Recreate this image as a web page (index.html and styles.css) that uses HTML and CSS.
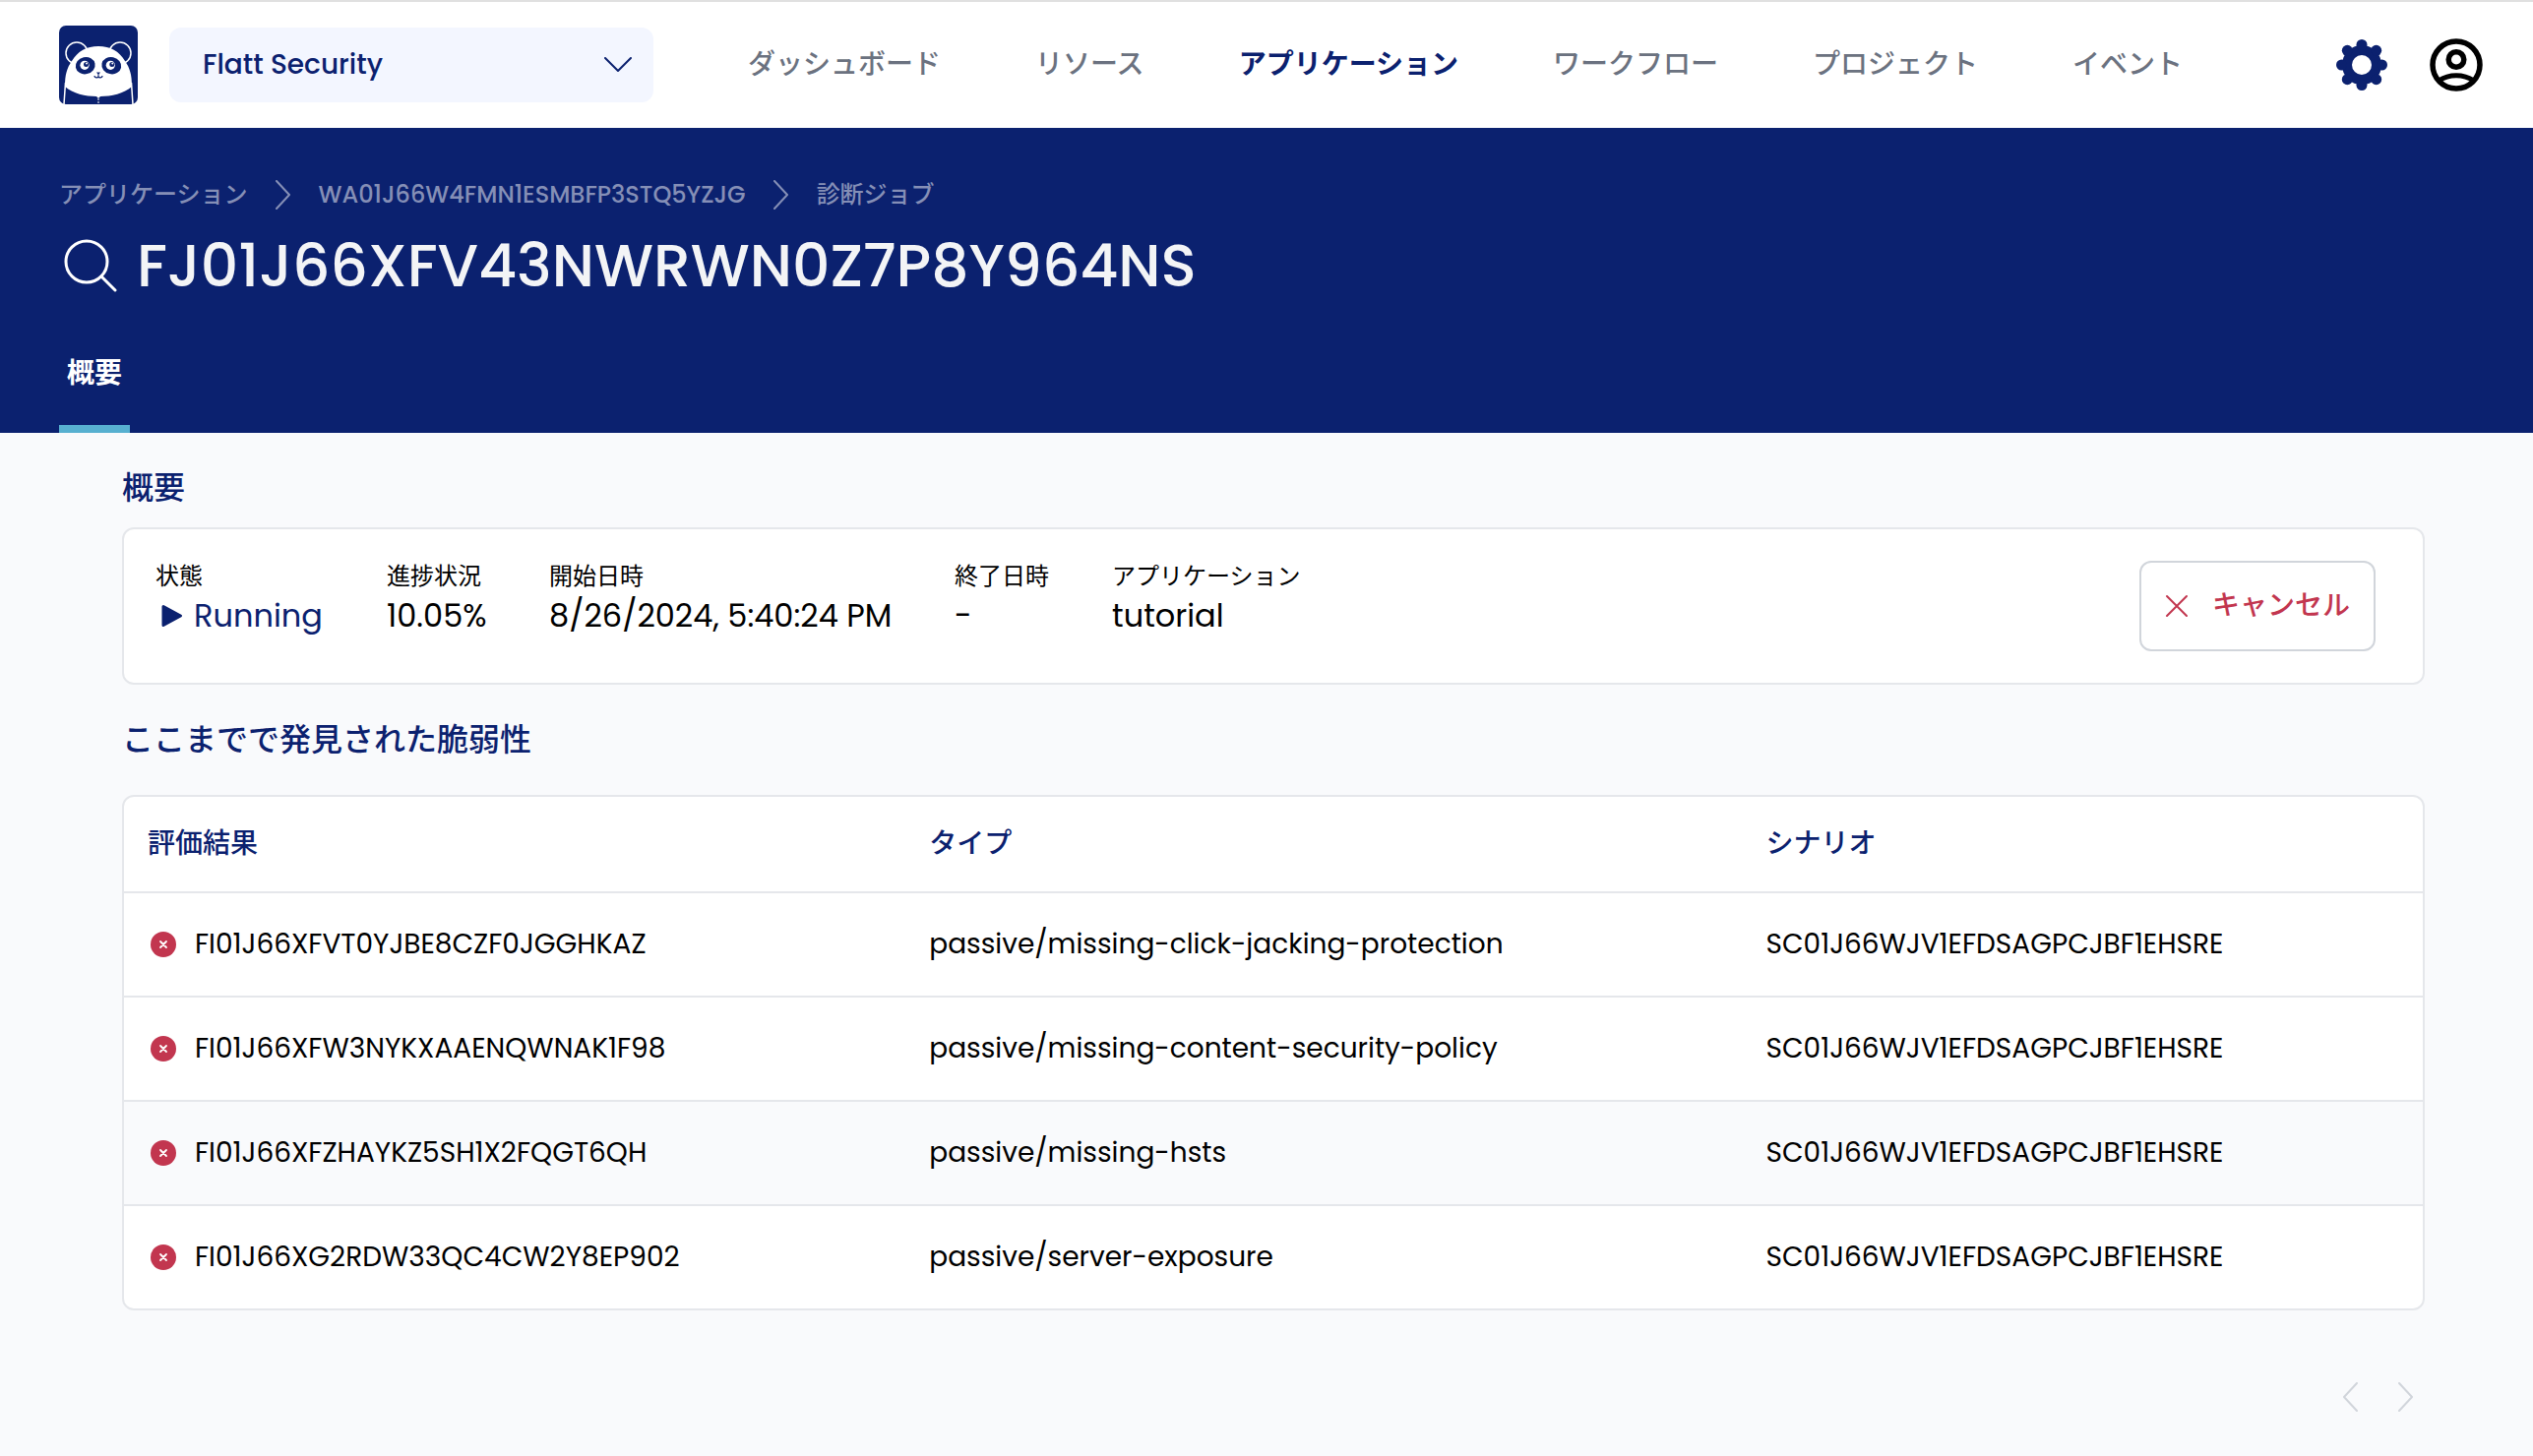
FILE: index.html
```html
<!DOCTYPE html>
<html lang="ja">
<head>
<meta charset="utf-8">
<meta name="viewport" content="width=device-width, initial-scale=1">
<title>FJ01J66XFV43NWRWN0Z7P8Y964NS</title>
<link rel="stylesheet" href="styles.css">
</head>
<body>
<svg class="sprite" aria-hidden="true">
  <symbol id="failed" viewBox="0 0 26 26">
    <circle cx="13" cy="13" r="13" fill="#c2364f"/>
    <path d="M10 10l6 6M16 10l-6 6" stroke="#fff" stroke-width="1.800" stroke-linecap="round"/>
  </symbol>
  <symbol id="chevron" viewBox="0 0 16 30">
    <path d="M1 1l13 14L1 29" fill="none" stroke="currentColor" stroke-width="2" stroke-linecap="round" stroke-linejoin="round"/>
  </symbol>
</svg>

<header class="topbar">
  <a class="logo" href="#" aria-label="ホーム">
    <svg viewBox="0 0 80 80" width="80" height="80">
      <rect width="80" height="80" rx="7" fill="#0b216f"/>
      <g fill="#0b216f" stroke="#fff" stroke-width="1.5">
        <circle cx="18" cy="28" r="11"/>
        <circle cx="62" cy="28" r="11"/>
      </g>
      <path d="M6 62C6 50 8 43 13 36C19 26 28 21 40 21C52 21 61 26 67 36C72 43 74 50 74 62C66 69 53 72 42 72L40 74L38 72C27 72 14 69 6 62Z" fill="#fff"/>
      <path d="M6.500 58L5 80M73.500 58L75 80" stroke="#fff" stroke-width="1.500"/>
      <path d="M40 74v6" stroke="#fff" stroke-width="1" stroke-dasharray="2 1"/>
      <ellipse cx="26.700" cy="40.700" rx="10" ry="8.600" transform="rotate(-12 26.700 40.700)" fill="#0b216f"/>
      <ellipse cx="53.300" cy="40.700" rx="10" ry="8.600" transform="rotate(12 53.300 40.700)" fill="#0b216f"/>
      <circle cx="26" cy="40.300" r="4.600" fill="#fff"/>
      <circle cx="52.300" cy="40.300" r="4.600" fill="#fff"/>
      <circle cx="27.500" cy="39.500" r="2.500" fill="#0b216f"/>
      <circle cx="53.800" cy="39.500" r="2.500" fill="#0b216f"/>
      <circle cx="28" cy="38.500" r="1" fill="#fff"/>
      <circle cx="54.300" cy="38.500" r="1" fill="#fff"/>
      <path d="M38 47.500h4L40.500 49.500v1.500h-1v-1.500z" fill="#0b216f"/>
      <path d="M36 51c0 2.500 3.500 2.500 4 .5c.5 2 4 2 4-.5" fill="none" stroke="#0b216f" stroke-width="1.300"/>
    </svg>
  </a>
  <div class="team">
    <select class="team-select" aria-label="チーム">
      <option>Flatt Security</option>
    </select>
    <svg class="team-arrow" viewBox="0 0 28 16" width="28" height="16" aria-hidden="true">
      <path d="M1 1l13 13L27 1" fill="none" stroke="#0b216f" stroke-width="2" stroke-linecap="round" stroke-linejoin="round"/>
    </svg>
  </div>
  <nav class="nav" aria-label="メイン">
    <a href="#">ダッシュボード</a>
    <a href="#">リソース</a>
    <a href="#" class="current" aria-current="page">アプリケーション</a>
    <a href="#">ワークフロー</a>
    <a href="#">プロジェクト</a>
    <a href="#">イベント</a>
  </nav>
  <div class="tools">
    <button class="icon-button" type="button" aria-label="設定">
      <svg viewBox="0 0 54 54" width="54" height="54">
        <g fill="#0b216f">
          <circle cx="27" cy="27" r="15" fill="none" stroke="#0b216f" stroke-width="10"/>
          <circle cx="27" cy="6.500" r="5.500"/><circle cx="27" cy="47.500" r="5.500"/>
          <circle cx="6.500" cy="27" r="5.500"/><circle cx="47.500" cy="27" r="5.500"/>
          <circle cx="12.300" cy="12.300" r="5.500"/><circle cx="41.700" cy="12.300" r="5.500"/>
          <circle cx="12.300" cy="41.700" r="5.500"/><circle cx="41.700" cy="41.700" r="5.500"/>
        </g>
      </svg>
    </button>
    <button class="icon-button" type="button" aria-label="アカウント">
      <svg viewBox="0 0 54 54" width="54" height="54" fill="none" stroke="#000">
        <circle cx="27" cy="27" r="24" stroke-width="5.500"/>
        <circle cx="27" cy="21.500" r="7.800" stroke-width="5.500"/>
        <path d="M9 43C20 36 34 36 45 43" stroke-width="5"/>
      </svg>
    </button>
  </div>
</header>

<section class="hero">
  <nav class="crumbs" aria-label="パンくず">
    <a href="#">アプリケーション</a>
    <svg width="16" height="30" aria-hidden="true"><use href="#chevron"/></svg>
    <a href="#">WA01J66W4FMN1ESMBFP3STQ5YZJG</a>
    <svg width="16" height="30" aria-hidden="true"><use href="#chevron"/></svg>
    <a href="#">診断ジョブ</a>
  </nav>
  <div class="title-row">
    <svg viewBox="0 0 54 54" width="54" height="54" aria-hidden="true">
      <circle cx="23" cy="23" r="21" fill="none" stroke="#fff" stroke-width="3"/>
      <path d="M38 38l14 14" stroke="#fff" stroke-width="3" stroke-linecap="round"/>
    </svg>
    <h1>FJ01J66XFV43NWRWN0Z7P8Y964NS</h1>
  </div>
  <div class="tabs">
    <a class="tab" href="#" aria-current="page">概要</a>
  </div>
</section>

<main class="content">
  <h2 class="heading">概要</h2>
  <section class="summary">
    <dl class="facts">
      <div>
        <dt>状態</dt>
        <dd class="status">
          <svg viewBox="0 0 22 24" width="22" height="24" aria-hidden="true"><path d="M2 2.500L19.500 12L2 21.500Z" fill="#0b216f" stroke="#0b216f" stroke-width="3" stroke-linejoin="round"/></svg>Running</dd>
      </div>
      <div><dt>進捗状況</dt><dd>10.05%</dd></div>
      <div><dt>開始日時</dt><dd>8/26/2024, 5:40:24 PM</dd></div>
      <div><dt>終了日時</dt><dd>-</dd></div>
      <div><dt>アプリケーション</dt><dd>tutorial</dd></div>
    </dl>
    <button class="cancel" type="button">
      <svg viewBox="0 0 24 24" width="24" height="24" aria-hidden="true"><path d="M2 2l20 20M22 2L2 22" stroke="#c2364f" stroke-width="2" stroke-linecap="round"/></svg>
      キャンセル
    </button>
  </section>

  <h2 class="heading">ここまでで発見された脆弱性</h2>
  <div class="table-card">
    <table class="findings">
      <thead>
        <tr><th class="col-result" scope="col">評価結果</th><th class="col-type" scope="col">タイプ</th><th scope="col">シナリオ</th></tr>
      </thead>
      <tbody>
        <tr>
          <td><span class="result"><svg width="26" height="26" aria-hidden="true"><use href="#failed"/></svg>FI01J66XFVT0YJBE8CZF0JGGHKAZ</span></td>
          <td>passive/missing-click-jacking-protection</td>
          <td>SC01J66WJV1EFDSAGPCJBF1EHSRE</td>
        </tr>
        <tr>
          <td><span class="result"><svg width="26" height="26" aria-hidden="true"><use href="#failed"/></svg>FI01J66XFW3NYKXAAENQWNAK1F98</span></td>
          <td>passive/missing-content-security-policy</td>
          <td>SC01J66WJV1EFDSAGPCJBF1EHSRE</td>
        </tr>
        <tr class="hovered">
          <td><span class="result"><svg width="26" height="26" aria-hidden="true"><use href="#failed"/></svg>FI01J66XFZHAYKZ5SH1X2FQGT6QH</span></td>
          <td>passive/missing-hsts</td>
          <td>SC01J66WJV1EFDSAGPCJBF1EHSRE</td>
        </tr>
        <tr>
          <td><span class="result"><svg width="26" height="26" aria-hidden="true"><use href="#failed"/></svg>FI01J66XG2RDW33QC4CW2Y8EP902</span></td>
          <td>passive/server-exposure</td>
          <td>SC01J66WJV1EFDSAGPCJBF1EHSRE</td>
        </tr>
      </tbody>
    </table>
  </div>

  <div class="pager">
    <button class="pager-button" type="button" aria-label="前へ" disabled><svg class="prev" width="16" height="30"><use href="#chevron"/></svg></button>
    <button class="pager-button" type="button" aria-label="次へ" disabled><svg width="16" height="30"><use href="#chevron"/></svg></button>
  </div>
</main>
</body>
</html>
```
FILE: styles.css
```css
* {
  box-sizing: border-box;
}

body {
  margin: 0;
  background: #f9fafc;
  color: #000;
  font-family: Poppins, Inter, "Noto Sans CJK JP", sans-serif;
  font-size: 28px;
  line-height: 48px;
}

a {
  color: inherit;
  text-decoration: none;
}

button,
select {
  font: inherit;
  color: inherit;
}

svg {
  display: block;
  flex: none;
}

h1,
h2,
dl,
dd {
  margin: 0;
}

.sprite {
  display: none;
}

/* Top bar */
.topbar {
  display: flex;
  align-items: center;
  height: 130px;
  padding: 0 51px 0 60px;
  border-top: 2px solid #e0e0e0;
  background: #fff;
}

.team {
  display: grid;
  align-items: center;
  width: 492px;
  margin-left: 32px;
}

.team-select {
  grid-area: 1 / 1;
  height: 76px;
  padding: 0 34px;
  border: 0;
  border-radius: 12px;
  appearance: none;
  background: #f3f6ff;
  color: #0b216f;
  font-weight: 500;
}

.team-arrow {
  grid-area: 1 / 1;
  justify-self: end;
  margin-right: 22px;
  pointer-events: none;
}

.nav {
  display: flex;
  gap: 96px;
  margin-left: 96px;
  color: #6b7280;
  font-weight: 500;
  white-space: nowrap;
}

.nav .current {
  color: #0b216f;
  font-weight: 700;
}

.tools {
  display: flex;
  gap: 42px;
  margin-left: auto;
}

.icon-button {
  padding: 0;
  border: 0;
  background: none;
}

/* Page head */
.hero {
  padding: 44px 60px 0;
  background: #0b216f;
  color: #fff;
}

.crumbs {
  display: flex;
  align-items: center;
  gap: 28px;
  color: #858fb6;
  font-size: 24px;
  font-weight: 500;
}

.title-row {
  display: flex;
  align-items: center;
  gap: 20px;
  padding-left: 5px;
}

.title-row h1 {
  color: #f3f4f6;
  font-size: 60px;
  font-weight: 500;
  line-height: 96px;
}

.tabs {
  display: flex;
  margin-top: 30px;
}

.tab {
  padding: 8px 8px 28px;
  border-bottom: 8px solid #57b0d0;
  font-weight: 700;
}

/* Content */
.content {
  padding: 32px 110px 32px 124px;
}

.heading {
  color: #0b216f;
  font-size: 32px;
  font-weight: 500;
}

.summary {
  display: flex;
  justify-content: space-between;
  align-items: flex-start;
  margin: 16px 0 32px;
  padding: 32px 48px 32px 32px;
  border: 2px solid #e5e7eb;
  border-radius: 12px;
  background: #fff;
}

.facts {
  display: grid;
  grid-template-columns: 171px 101px 348px 96px auto;
  gap: 64px;
  white-space: nowrap;
}

.facts dt {
  font-size: 24px;
  line-height: 32px;
}

.facts dd {
  font-size: 32px;
}

.facts .status {
  display: flex;
  align-items: center;
  gap: 11px;
  padding-left: 6px;
  color: #0b216f;
}

.cancel {
  display: flex;
  align-items: center;
  gap: 24px;
  height: 92px;
  padding: 0 24px;
  border: 2px solid #d1d5db;
  border-radius: 12px;
  background: #fff;
  color: #c2364f;
  font-weight: 500;
}

.table-card {
  margin-top: 32px;
  border: 2px solid #e5e7eb;
  border-radius: 12px;
  background: #fff;
  overflow: hidden;
}

.findings {
  width: 100%;
  border-collapse: separate;
  border-spacing: 0;
  table-layout: fixed;
  text-align: left;
}

.col-result {
  width: 34%;
}

.col-type {
  width: 36.4%;
}

.findings th {
  height: 98px;
  padding: 0 24px;
  border-bottom: 2px solid #e5e7eb;
  color: #0b216f;
  font-weight: 500;
}

.findings td {
  height: 106px;
  padding: 0 24px;
  border-bottom: 2px solid #e5e7eb;
}

.findings tr:last-child td {
  height: 104px;
  border-bottom: 0;
}

.hovered {
  background: #f9fafc;
}

.result {
  display: flex;
  align-items: center;
  gap: 19px;
  padding-left: 3px;
}

.pager {
  display: flex;
  justify-content: flex-end;
  gap: 41px;
  margin-top: 73px;
  padding-right: 11px;
}

.pager-button {
  padding: 0;
  border: 0;
  background: none;
  color: #d1d5db;
}

.prev {
  transform: scaleX(-1);
}
```
